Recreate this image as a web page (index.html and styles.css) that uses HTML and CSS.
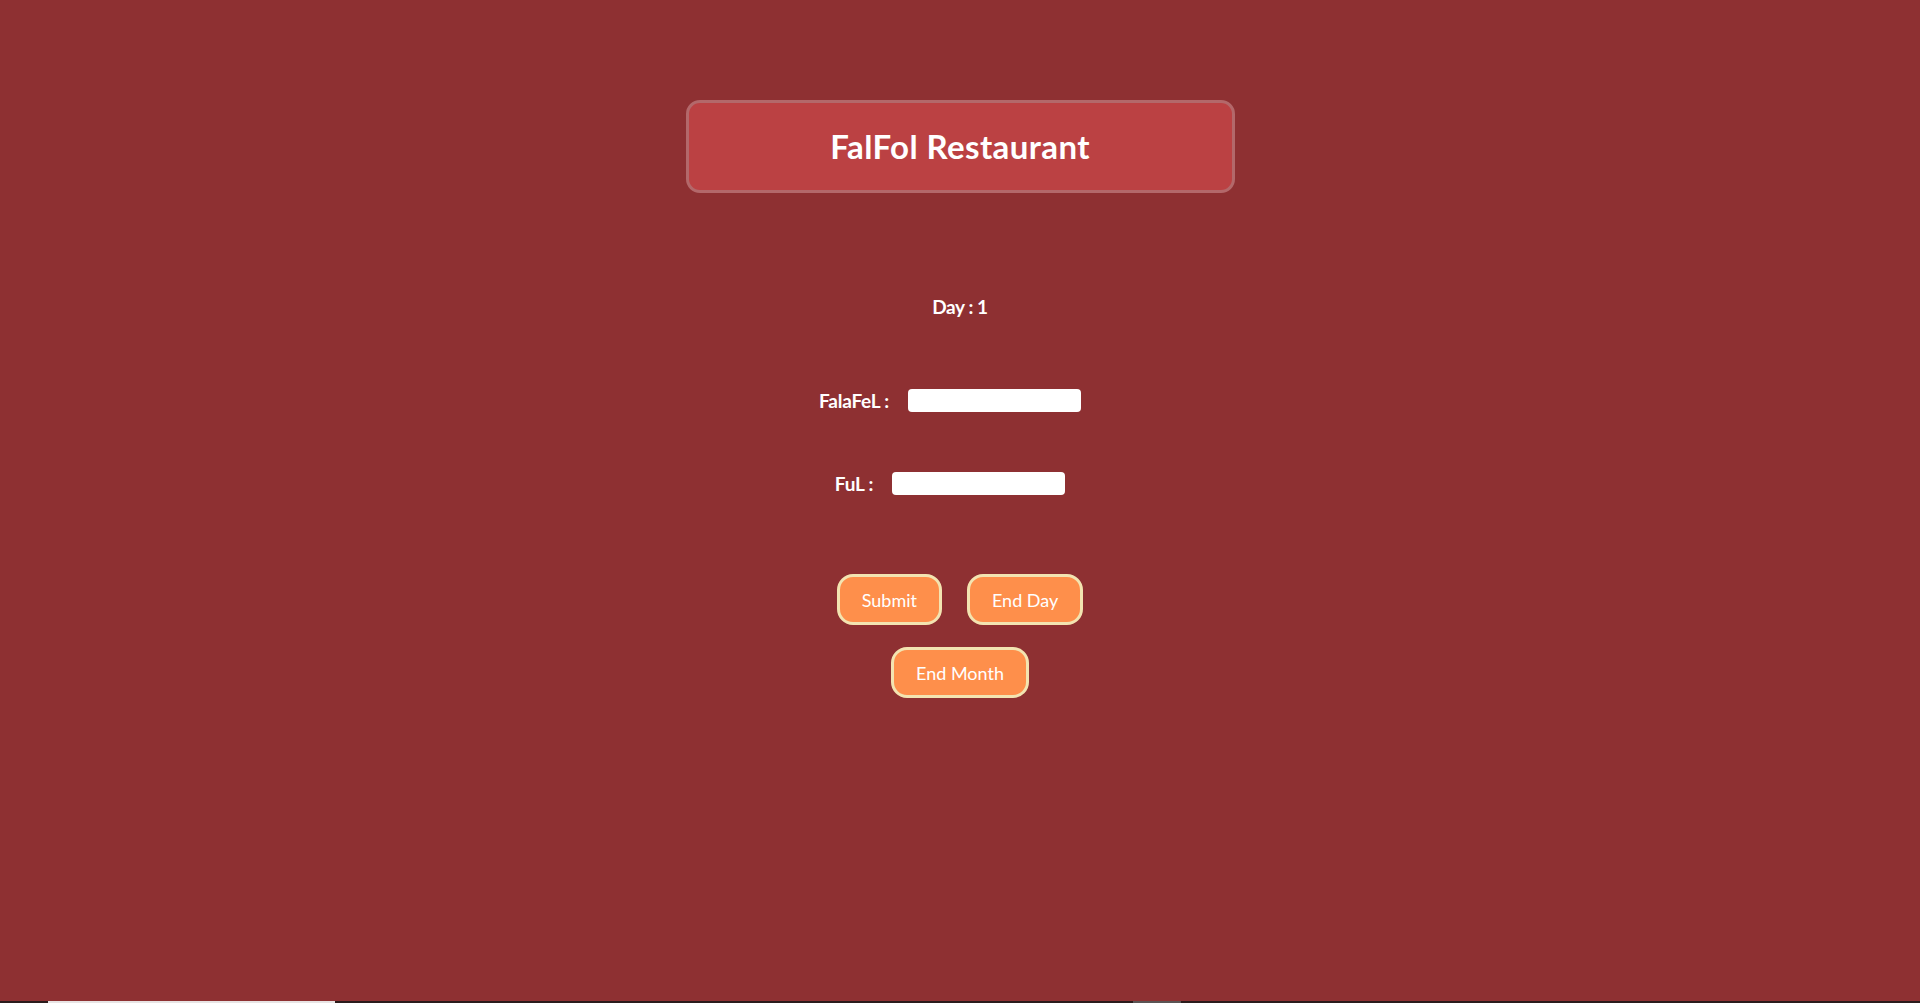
FILE: index.html
```html
<!DOCTYPE html>
<html lang="en">
<head>
<meta charset="utf-8">
<title>FalFol Restaurant</title>
<link rel="stylesheet" href="styles.css">
</head>
<body>
<main class="page">
  <header class="title-box">
    <h1 class="title">FalFol Restaurant</h1>
  </header>
  <div class="day">Day : 1</div>
  <div class="row row-first">
    <label class="label" for="falafel">FalaFeL :</label>
    <input class="field" id="falafel" type="text">
  </div>
  <div class="row row-second">
    <label class="label" for="ful">FuL :</label>
    <input class="field" id="ful" type="text">
  </div>
  <div class="btn-row btn-row-first">
    <button class="btn">Submit</button>
    <button class="btn">End Day</button>
  </div>
  <div class="btn-row btn-row-second">
    <button class="btn">End Month</button>
  </div>
</main>
<div class="bottom-strip">
  <span class="strip-white"></span>
  <span class="strip-grey"></span>
</div>
</body>
</html>
```
FILE: styles.css
```css
html, body {
  margin: 0;
  padding: 0;
  height: 100%;
}
body {
  background: #8e3032;
  font-family: Lato, "Open Sans", sans-serif;
  color: #ffffff;
  overflow: hidden;
}
.page {
  display: flex;
  flex-direction: column;
  align-items: center;
}
.title-box {
  box-sizing: border-box;
  width: 549px;
  height: 93px;
  margin-top: 100px;
  background: #bb4143;
  border: 3px solid #b3686a;
  border-radius: 14px;
  display: flex;
  align-items: center;
  justify-content: center;
}
.title {
  margin: 0;
  font-size: 33px;
  font-weight: 700;
  line-height: 1;
  letter-spacing: 0.4px;
}
.day {
  margin-top: 102px;
  font-size: 19px;
  line-height: 24px;
  font-weight: 700;
  letter-spacing: -0.4px;
}
.row {
  display: flex;
  align-items: center;
  gap: 19px;
  height: 23px;
  padding-right: 20px;
}
.row-first { margin-top: 70px; }
.row-second { margin-top: 60px; }
.label {
  font-size: 19px;
  font-weight: 700;
  letter-spacing: -0.2px;
  line-height: 23px;
}
.field {
  box-sizing: border-box;
  width: 173px;
  height: 23px;
  border: none;
  border-radius: 4px;
  background: #ffffff;
  padding: 0 4px;
  outline: none;
}
.btn-row {
  display: flex;
  justify-content: center;
  gap: 25px;
}
.btn-row-first { margin-top: 79px; }
.btn-row-second { margin-top: 22px; }
.btn {
  box-sizing: border-box;
  height: 51px;
  padding: 0 22px;
  background: #fe8f4b;
  border: 3px solid #f3e4b1;
  border-radius: 16px;
  color: #ffffff;
  font-family: Lato, "Open Sans", sans-serif;
  font-size: 18px;
  font-weight: 400;
}
.bottom-strip {
  position: fixed;
  left: 0;
  right: 0;
  bottom: 0;
  height: 2px;
  background: #2b1c1c;
}
.strip-white {
  position: absolute;
  left: 48px;
  width: 287px;
  top: 0;
  height: 2px;
  background: #e8e4e4;
}
.strip-grey {
  position: absolute;
  left: 1133px;
  width: 48px;
  top: 0;
  height: 2px;
  background: #5a5454;
}
```
